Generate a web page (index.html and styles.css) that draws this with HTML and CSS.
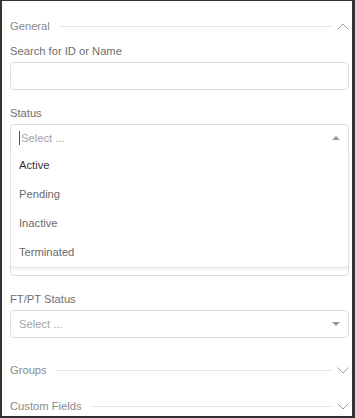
FILE: index.html
```html
<!DOCTYPE html>
<html lang="en">
<head>
  <meta charset="UTF-8" />
  <meta name="viewport" content="width=device-width,initial-scale=1.0" />
  <title>Filters</title>
  <link rel="stylesheet" href="styles.css">
</head>
<body>
  <div class="filter-panel">
    <div class="section-head first">
      <span class="section-title">General</span>
      <span class="section-line"></span>
      <svg class="chevron" width="12" height="7" viewBox="0 0 12 7"><path d="M0.5 6.5 L6 1 L11.5 6.5" fill="none" stroke="#9a9a9a" stroke-width="1"/></svg>
    </div>

    <div class="field">
      <label class="field-label">Search for ID or Name</label>
      <div class="text-input"></div>
    </div>

    <div class="field">
      <label class="field-label">Status</label>
      <div class="select-wrap">
        <div class="select-box open">
          <span class="caret"></span><span class="placeholder">Select ...</span>
          <span class="tri tri-up"></span>
        </div>
        <ul class="select-menu">
          <li class="option active">Active</li>
          <li class="option">Pending</li>
          <li class="option">Inactive</li>
          <li class="option">Terminated</li>
        </ul>
      </div>
    </div>

    <!-- two fields sitting under the open menu -->
    <div class="field">
      <div class="field-label"></div>
      <div class="select-box"></div>
    </div>

    <div class="field">
      <div class="field-label"></div>
      <div class="select-box"></div>
    </div>

    <div class="field">
      <label class="field-label">FT/PT Status</label>
      <div class="select-box">
        <span class="placeholder">Select ...</span>
        <span class="tri tri-down"></span>
      </div>
    </div>

    <div class="section-head groups">
      <span class="section-title">Groups</span>
      <span class="section-line"></span>
      <svg class="chevron" width="12" height="7" viewBox="0 0 12 7"><path d="M0.5 0.5 L6 6 L11.5 0.5" fill="none" stroke="#9a9a9a" stroke-width="1"/></svg>
    </div>

    <div class="section-head custom">
      <span class="section-title">Custom Fields</span>
      <span class="section-line"></span>
      <svg class="chevron" width="12" height="7" viewBox="0 0 12 7"><path d="M0.5 0.5 L6 6 L11.5 0.5" fill="none" stroke="#9a9a9a" stroke-width="1"/></svg>
    </div>
  </div>
</body>
</html>
```

FILE: styles.css
```css
html, body {
  margin: 0;
  padding: 0;
  background: #fff;
}
body {
  font-family: "Liberation Sans", Arial, sans-serif;
  font-size: 11.2px;
}
.filter-panel {
  box-sizing: border-box;
  width: 355px;
  height: 418px;
  overflow: hidden;
  border-style: solid;
  border-color: #333;
  border-width: 1px 3px 2px 2px;
  padding: 17px 3px 0 8px;
  background: #fff;
}
.section-head {
  display: flex;
  align-items: center;
  height: 16px;
  line-height: 16px;
}
.section-head.first {
  margin-bottom: 9px;
}
.section-head.groups {
  margin-top: 24px;
}
.section-head.custom {
  margin-top: 20px;
}
.section-title {
  color: #8a8a8a;
  white-space: nowrap;
}
.section-line {
  flex: 1;
  height: 1px;
  background: #e6e6e6;
  margin: 0 5px 0 9px;
}
.chevron {
  display: block;
  flex: none;
}
.field {
  margin-bottom: 15px;
}
.field-label {
  display: block;
  height: 16px;
  line-height: 16px;
  color: #6e6e6e;
  margin-bottom: 3px;
}
.text-input,
.select-box {
  box-sizing: border-box;
  height: 28px;
  border: 1px solid #dedede;
  border-radius: 4px;
  background: #fff;
}
.select-box {
  display: flex;
  align-items: center;
  padding: 0 8px;
}
.select-box.open {
  border-bottom-left-radius: 0;
  border-bottom-right-radius: 0;
  border-bottom-color: #ececec;
}
.placeholder {
  flex: 1;
  color: #a3a3a3;
}
.caret {
  width: 1px;
  height: 14px;
  background: #555;
  margin-right: 1px;
}
.tri {
  width: 0;
  height: 0;
  border-left: 4px solid transparent;
  border-right: 4px solid transparent;
}
.tri-up {
  border-bottom: 4px solid #9a9a9a;
}
.tri-down {
  border-top: 4px solid #9a9a9a;
}
.select-wrap {
  position: relative;
}
.select-menu {
  position: absolute;
  left: 0;
  right: 0;
  top: 27px;
  margin: 0;
  padding: 0;
  list-style: none;
  background: #fff;
  border: 1px solid #e2e2e2;
  border-top: none;
  border-radius: 0 0 4px 4px;
  box-shadow: 0 2px 3px rgba(0,0,0,0.06);
  z-index: 2;
}
.option {
  height: 29px;
  line-height: 29px;
  padding-left: 8px;
  color: #6a6a6a;
}
.option.active {
  color: #333;
}
```
